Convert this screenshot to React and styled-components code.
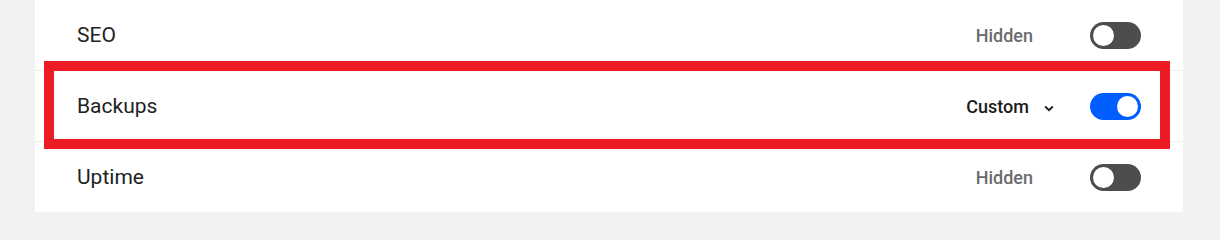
import React from "react";
import styled, { createGlobalStyle } from "styled-components";

const GlobalStyle = createGlobalStyle`
  body {
    margin: 0;
    background: #f2f2f2;
    font-family: Roboto, "Liberation Sans", sans-serif;
  }
`;

const Panel = styled.div`
  margin-left: 35px;
  width: 1148px;
  background: #ffffff;
`;

const Row = styled.div`
  position: relative;
  display: flex;
  align-items: center;
  height: 70px;
  padding: 0 42px;
  border-bottom: 1px solid #eeeeee;

  &:last-child {
    border-bottom: none;
  }
`;

const Label = styled.span`
  flex: 1;
  font-size: 21px;
  color: #222222;
`;

const Status = styled.span`
  display: flex;
  align-items: center;
  gap: 15px;
  margin-right: ${(p) => (p.active ? "36px" : "57px")};
  font-size: 18px;
  font-weight: 500;
  color: ${(p) => (p.active ? "#1a1a1a" : "#6b6b6b")};
`;

const Toggle = styled.span`
  position: relative;
  width: 51px;
  height: 27px;
  border-radius: 14px;
  background: ${(p) => (p.on ? "#005eff" : "#4d4d4d")};

  &:after {
    content: "";
    position: absolute;
    top: 3px;
    left: ${(p) => (p.on ? "27px" : "3px")};
    width: 21px;
    height: 21px;
    border-radius: 50%;
    background: #ffffff;
  }
`;

const Highlight = styled.div`
  position: absolute;
  left: 9px;
  right: 13px;
  top: -10px;
  bottom: -8px;
  border: 10px solid #ed1c24;
  pointer-events: none;
`;

const Chevron = () => (
  <svg width="10" height="7" viewBox="0 0 10 7" style={{ marginTop: 4 }}>
    <path d="M1.2 1.5 L5 5.2 L8.8 1.5" fill="none" stroke="#1a1a1a" strokeWidth="1.8" />
  </svg>
);

const rows = [
  { label: "SEO", status: "Hidden", on: false },
  { label: "Backups", status: "Custom", on: true, dropdown: true, highlight: true },
  { label: "Uptime", status: "Hidden", on: false },
];

export default function App() {
  return (
    <>
      <GlobalStyle />
      <Panel>
        {rows.map((r) => (
          <Row key={r.label}>
            <Label>{r.label}</Label>
            <Status active={r.dropdown}>
              {r.status}
              {r.dropdown && <Chevron />}
            </Status>
            <Toggle on={r.on} />
            {r.highlight && <Highlight />}
          </Row>
        ))}
      </Panel>
    </>
  );
}
